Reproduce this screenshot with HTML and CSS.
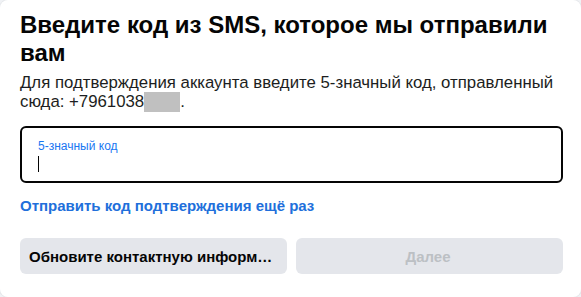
FILE: index.html
```html
<!DOCTYPE html>
<html lang="ru">
<head>
<meta charset="utf-8">
<title>Введите код из SMS</title>
<link rel="stylesheet" href="styles.css">
</head>
<body>
<div class="card">
  <h1 class="title">Введите код из SMS, которое мы отправили вам</h1>
  <p class="desc">Для подтверждения аккаунта введите 5-значный код, отправленный сюда: +7961038<span class="redact"></span>.</p>
  <div class="field">
    <span class="field-label">5-значный код</span>
    <span class="caret"></span>
  </div>
  <a class="resend" href="#">Отправить код подтверждения ещё раз</a>
  <div class="actions">
    <button class="btn">Обновите контактную информацию</button>
    <button class="btn btn-disabled" disabled>Далее</button>
  </div>
</div>
</body>
</html>
```
FILE: styles.css
```css
* { box-sizing: border-box; }
html, body { margin: 0; padding: 0; background: #f0f2f5; }
body { font-family: "Liberation Sans", Arial, sans-serif; color: #050505; }
.card {
  width: 581px;
  height: 297px;
  background: #fff;
  border-radius: 8px;
  box-shadow: 0 0 0 1px rgba(0,0,0,0.04);
  padding: 11px 18px 0 20px;
  display: flex;
  flex-direction: column;
}
.title {
  margin: 0;
  font-size: 24px;
  line-height: 28px;
  font-weight: 700;
  color: #050505;
}
.desc {
  margin: 6px 0 0;
  font-size: 16.8px;
  line-height: 19px;
  color: #1c1e21;
}
.redact {
  display: inline-block;
  width: 36px;
  height: 20px;
  background: #c0c0c0;
  vertical-align: -5px;
}
.field {
  margin-top: 14px;
  height: 57px;
  border: 2px solid #050505;
  border-radius: 6px;
  padding: 11px 0 0 16px;
  display: flex;
  flex-direction: column;
  align-items: flex-start;
}
.field-label {
  font-size: 12px;
  line-height: 14px;
  color: #1877f2;
}
.caret {
  margin-top: 3px;
  width: 1px;
  height: 16px;
  background: #050505;
}
.resend {
  margin-top: 13px;
  align-self: flex-start;
  font-size: 15px;
  line-height: 19px;
  font-weight: 700;
  color: #216fdb;
  text-decoration: none;
}
.actions {
  margin-top: 23px;
  display: grid;
  grid-template-columns: 1fr 1fr;
  gap: 9px;
}
.btn {
  height: 36px;
  border: 0;
  border-radius: 6px;
  background: #e4e6eb;
  font-family: "Liberation Sans", Arial, sans-serif;
  font-size: 15px;
  font-weight: 700;
  color: #050505;
  padding: 0 12px 0 9px;
  text-align: left;
  white-space: nowrap;
  overflow: hidden;
  text-overflow: ellipsis;
}
.btn-disabled {
  text-align: center;
  color: #bcc0c4;
}
```
